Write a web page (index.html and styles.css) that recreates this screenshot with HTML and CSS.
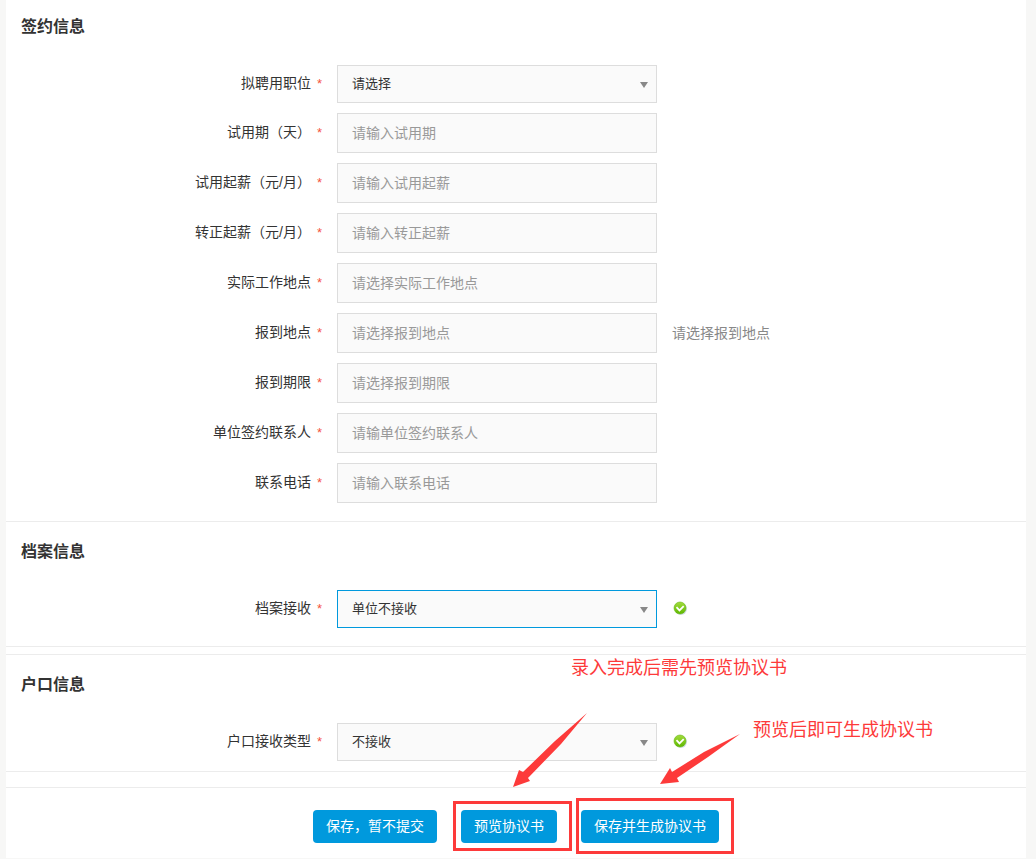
FILE: index.html
```
<!DOCTYPE html>
<html lang="zh-CN">

<head>
    <meta charset="UTF-8">
    <meta name="viewport" content="width=device-width, initial-scale=1">
    <title>签约信息</title>
    <link rel="stylesheet" href="styles.css">
</head>

<body>

    <form class="card">
        <section class="section section-first">
            <h2 class="section-title">签约信息</h2>
            <div class="rows">
                <div class="row">
                    <label class="label" for="position">拟聘用职位<span class="required">*</span></label>
                    <div class="select-box">
                        <select class="control select" id="position">
                            <option>请选择</option>
                        </select>
                    </div>
                </div>
                <div class="row">
                    <label class="label" for="trial-days">试用期（天）<span class="required">*</span></label>
                    <input class="control" id="trial-days" type="text" placeholder="请输入试用期">
                </div>
                <div class="row">
                    <label class="label" for="trial-salary">试用起薪（元/月）<span class="required">*</span></label>
                    <input class="control" id="trial-salary" type="text" placeholder="请输入试用起薪">
                </div>
                <div class="row">
                    <label class="label" for="salary">转正起薪（元/月）<span class="required">*</span></label>
                    <input class="control" id="salary" type="text" placeholder="请输入转正起薪">
                </div>
                <div class="row">
                    <label class="label" for="work-place">实际工作地点<span class="required">*</span></label>
                    <input class="control" id="work-place" type="text" placeholder="请选择实际工作地点">
                </div>
                <div class="row">
                    <label class="label" for="report-place">报到地点<span class="required">*</span></label>
                    <input class="control" id="report-place" type="text" placeholder="请选择报到地点">
                    <span class="hint">请选择报到地点</span>
                </div>
                <div class="row">
                    <label class="label" for="report-date">报到期限<span class="required">*</span></label>
                    <input class="control" id="report-date" type="text" placeholder="请选择报到期限">
                </div>
                <div class="row">
                    <label class="label" for="contact">单位签约联系人<span class="required">*</span></label>
                    <input class="control" id="contact" type="text" placeholder="请输单位签约联系人">
                </div>
                <div class="row">
                    <label class="label" for="phone">联系电话<span class="required">*</span></label>
                    <input class="control" id="phone" type="text" placeholder="请输入联系电话">
                </div>
            </div>
        </section>

        <section class="section section-archive">
            <h2 class="section-title">档案信息</h2>
            <div class="row">
                <label class="label" for="archive">档案接收<span class="required">*</span></label>
                <div class="select-box">
                    <select class="control select active" id="archive">
                        <option>单位不接收</option>
                    </select>
                </div>
                <svg class="ok" viewBox="0 0 16 16" aria-hidden="true">
                    <defs>
                        <linearGradient id="green" x1="0" y1="0" x2="0" y2="1">
                            <stop offset="0" stop-color="#a3dc3c" />
                            <stop offset="1" stop-color="#5fb800" />
                        </linearGradient>
                    </defs>
                    <circle cx="9" cy="8" r="6" fill="#d5dfec" />
                    <circle cx="8" cy="7" r="6" fill="url(#green)" stroke="#65b512" stroke-width="0.6" />
                    <path d="M4.5 6.2l3 3.2 4.2-4.2" fill="none" stroke="#fff" stroke-width="1.8" />
                </svg>
            </div>
        </section>

        <section class="section section-household">
            <h2 class="section-title">户口信息</h2>
            <div class="row">
                <label class="label" for="household">户口接收类型<span class="required">*</span></label>
                <div class="select-box">
                    <select class="control select" id="household">
                        <option>不接收</option>
                    </select>
                </div>
                <svg class="ok" viewBox="0 0 16 16" aria-hidden="true">
                    <circle cx="9" cy="8" r="6" fill="#d5dfec" />
                    <circle cx="8" cy="7" r="6" fill="url(#green)" stroke="#65b512" stroke-width="0.6" />
                    <path d="M4.5 6.2l3 3.2 4.2-4.2" fill="none" stroke="#fff" stroke-width="1.8" />
                </svg>
            </div>
        </section>

        <footer class="actions">
            <button class="btn" type="button">保存，暂不提交</button>
            <div class="step step-preview">
                <button class="btn" type="button">预览协议书</button>
                <span class="frame"></span>
                <svg class="arrow" viewBox="0 0 74 74" aria-hidden="true">
                    <path d="M74 0L42 28 10 59 6 57 0 74l17-6-2-3 33-34z" fill="#fd3a3a" />
                </svg>
                <span class="note">录入完成后需先预览协议书</span>
            </div>
            <div class="step step-save">
                <button class="btn" type="button">保存并生成协议书</button>
                <span class="frame"></span>
                <svg class="arrow" viewBox="0 0 80 50" aria-hidden="true">
                    <path d="M80 0L44 18 12 38 10 34 0 50l19-2-2-4 31-21z" fill="#fd3a3a" />
                </svg>
                <span class="note">预览后即可生成协议书</span>
            </div>
        </footer>
    </form>

</body>

</html>
```
FILE: styles.css
```
* {
    box-sizing: border-box;
}

body {
    margin: 0;
    padding: 0 10px 0 6px;
    background-color: #f7f7f6;
    color: #333;
    font-family: "Liberation Sans", "Noto Sans CJK SC", sans-serif;
    font-size: 14px;
    line-height: 20px;
}

.card {
    background-color: #fff;
}

.section {
    padding: 17px 0 18px;
    border-top: 1px solid #ececec;
}

.section-first {
    padding-top: 14px;
    border-top: none;
}

.section-archive {
    border-bottom: 1px solid #ececec;
}

.section-household {
    margin-top: 7px;
    padding-bottom: 10px;
    border-bottom: 1px solid #ececec;
}

.section-title {
    margin: 0 0 25px;
    padding-left: 15px;
    font-size: 16px;
    line-height: 26px;
}

.rows {
    display: flex;
    flex-direction: column;
    gap: 10px;
}

.row {
    display: flex;
    align-items: center;
}

.label {
    flex: 0 0 331px;
    padding: 0 15px 1px 0;
    text-align: right;
}

.required {
    margin-left: 6px;
    color: #f5533d;
    font-size: 13px;
}

.control {
    width: 320px;
    height: 40px;
    padding: 0 14px;
    border: 1px solid #ddd;
    border-radius: 0;
    background-color: #fafafa;
    color: #333;
    font-family: inherit;
    font-size: 14px;
    outline: none;
}

.control::placeholder {
    color: #999;
}

.select-box {
    position: relative;
}

/* drop-down triangle */
.select-box::after {
    content: "";
    position: absolute;
    top: 17px;
    right: 9px;
    border: 4px solid transparent;
    border-top: 6px solid #888;
    border-bottom: none;
    pointer-events: none;
}

.select {
    display: block;
    height: 38px;
    padding-bottom: 1px;
    appearance: none;
    font-size: 13px;
}

.control.active,
.control:focus {
    border-color: #0099dd;
}

.hint {
    margin-left: 15px;
    padding-bottom: 1px;
    color: #888;
}

.ok {
    width: 16px;
    height: 16px;
    margin-left: 15px;
}

.actions {
    display: flex;
    justify-content: center;
    gap: 24px;
    margin-top: 15px;
    padding: 22px 0 15px;
    border-top: 1px solid #ececec;
}

.btn {
    height: 33px;
    padding: 0 13px 3px;
    border: none;
    border-radius: 4px;
    background-color: #0099dd;
    color: #fff;
    font-family: inherit;
    font-size: 14px;
    cursor: pointer;
}

/* red guide marks over the form */
.step {
    position: relative;
}

.frame,
.arrow,
.note {
    position: absolute;
    pointer-events: none;
}

.frame {
    border: 3px solid #fd3a3a;
}

.note {
    color: #fd3a3a;
    font-size: 18px;
    line-height: 26px;
    white-space: nowrap;
}

.step-preview .frame {
    inset: -9px -15px -8px -8px;
}

.step-preview .arrow {
    left: 52px;
    bottom: 56px;
    width: 74px;
    height: 74px;
}

.step-preview .note {
    left: 110px;
    bottom: 162px;
}

.step-save .frame {
    inset: -12px -15px -11px -5px;
}

.step-save .arrow {
    left: 79px;
    bottom: 59px;
    width: 80px;
    height: 50px;
}

.step-save .note {
    left: 172px;
    bottom: 100px;
}
```
